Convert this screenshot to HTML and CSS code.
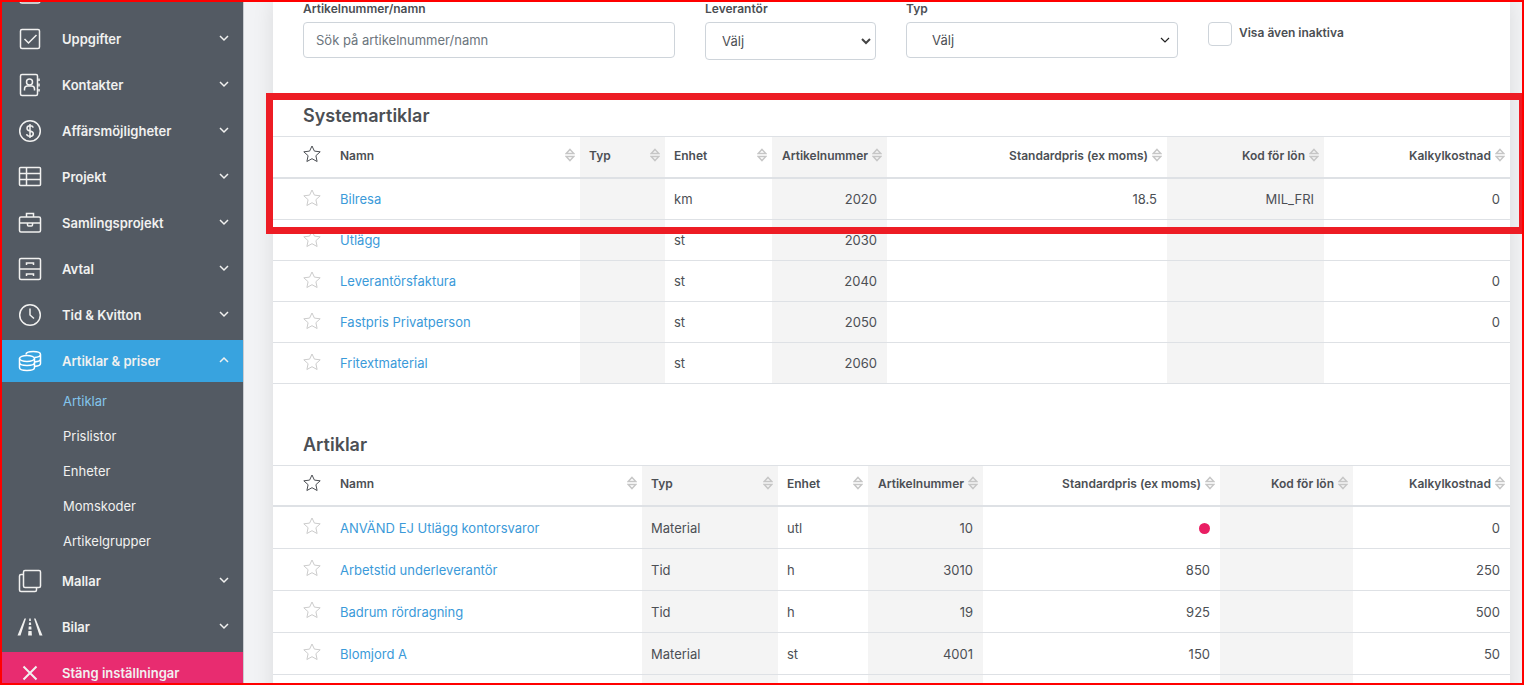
FILE: index.html
```
<!DOCTYPE html>
<html lang="sv">
<head>
	<meta charset="UTF-8">
	<title>Artiklar</title>
	<link rel="stylesheet" href="styles.css">
</head>
<body>

<!-- shared symbols -->
<svg class="symbols" aria-hidden="true">
	<symbol id="chevron" viewBox="0 0 10 10"><path d="M1 3l4 4 4-4"/></symbol>
	<symbol id="star" viewBox="0 0 18 18"><path d="M9 1l2.400 5.100 5.800.7-4.300 3.900 1.200 5.800L9 13.700l-5.100 2.800 1.200-5.800L.8 6.800l5.800-.7z"/></symbol>
	<symbol id="sort" viewBox="0 0 10 14"><path d="M5 1.400L8.900 5.600H1.100zM5 12.600L8.900 8.400H1.100z"/></symbol>
</svg>

<div class="app">
	<nav class="sidebar">
		<ul class="menu">
			<li><button type="button" class="menu-item">
				<svg class="icon" viewBox="0 0 24 24"><rect x="2" y="2" width="20" height="20" rx="2"/></svg>
			</button></li>
			<li><button type="button" class="menu-item">
				<svg class="icon" viewBox="0 0 24 24"><rect x="2.500" y="2.500" width="19" height="19" rx="1.500"/><path d="M6.500 12l4 4 8-8"/></svg>
				<span>Uppgifter</span><svg class="chevron"><use href="#chevron"/></svg>
			</button></li>
			<li><button type="button" class="menu-item">
				<svg class="icon" viewBox="0 0 24 24"><rect x="2.500" y="1.500" width="17" height="21" rx="1.500"/><circle cx="11.500" cy="9" r="3"/><path d="M6.500 17.500v-1.500q0-3 3-3h4q3 0 3 3v1.500M21 5.500v2.500M21 10.500v3M21 16v2.500"/></svg>
				<span>Kontakter</span><svg class="chevron"><use href="#chevron"/></svg>
			</button></li>
			<li><button type="button" class="menu-item">
				<svg class="icon" viewBox="0 0 24 24"><circle cx="12" cy="12" r="10.300"/><path d="M15.200 8.600q-.5-1.900-3.200-1.900-3 0-3 2.500 0 2 3 2.700 3.300.700 3.300 2.800 0 2.600-3.300 2.600-2.900 0-3.400-2.200M12 5v14"/></svg>
				<span>Affärsmöjligheter</span><svg class="chevron"><use href="#chevron"/></svg>
			</button></li>
			<li><button type="button" class="menu-item">
				<svg class="icon" viewBox="0 0 24 24"><rect x="1.500" y="2.500" width="21" height="18" rx="1"/><path d="M1.500 8.500h21M1.500 14.500h21M8.500 2.500v18"/></svg>
				<span>Projekt</span><svg class="chevron"><use href="#chevron"/></svg>
			</button></li>
			<li><button type="button" class="menu-item">
				<svg class="icon" viewBox="0 0 24 24"><rect x="1.500" y="6" width="21" height="15" rx="1.500"/><path d="M8.500 6V2.500h7V6M1.500 12h21M9.500 12v2q0 1 1 1h3q1 0 1-1v-2"/></svg>
				<span>Samlingsprojekt</span><svg class="chevron"><use href="#chevron"/></svg>
			</button></li>
			<li><button type="button" class="menu-item">
				<svg class="icon" viewBox="0 0 24 24"><rect x="1.500" y="1.500" width="21" height="21" rx="1.500"/><path d="M1.500 12h21M8.500 8V6h7v2M8.500 19v-2h7v2"/></svg>
				<span>Avtal</span><svg class="chevron"><use href="#chevron"/></svg>
			</button></li>
			<li><button type="button" class="menu-item">
				<svg class="icon" viewBox="0 0 24 24"><circle cx="12" cy="12" r="10.300"/><path d="M12 5.500V12l4 3.500"/></svg>
				<span>Tid &amp; Kvitton</span><svg class="chevron"><use href="#chevron"/></svg>
			</button></li>
			<li class="open"><button type="button" class="menu-item active" aria-expanded="true">
				<svg class="icon coins" viewBox="0 0 24 24"><ellipse cx="9" cy="9.500" rx="7.500" ry="3"/><path d="M1.500 9.500v9c0 1.700 3.300 3 7.500 3s7.500-1.300 7.500-3v-9M1.500 13.500c0 1.700 3.300 3 7.500 3s7.500-1.300 7.500-3"/><path d="M8 5.500c0-1.700 3.200-3 7.300-3s7.200 1.300 7.200 3-2.500 2.800-6 3M22.500 5.500v9c0 1.500-2.500 2.600-6 2.900M22.500 10c0 1.500-2.500 2.600-6 2.900"/></svg>
				<span>Artiklar &amp; priser</span><svg class="chevron up"><use href="#chevron"/></svg>
			</button>
				<ul class="submenu">
					<li><a href="#artiklar" class="current">Artiklar</a></li>
					<li><a href="#prislistor">Prislistor</a></li>
					<li><a href="#enheter">Enheter</a></li>
					<li><a href="#momskoder">Momskoder</a></li>
					<li><a href="#artikelgrupper">Artikelgrupper</a></li>
				</ul>
			</li>
			<li><button type="button" class="menu-item">
				<svg class="icon" viewBox="0 0 24 24"><rect x="5.500" y="1.500" width="17" height="17" rx="1.500"/><path d="M5.500 5.500H3q-1.500 0-1.500 1.500v14q0 1.500 1.500 1.500h14q1.500 0 1.500-1.500v-2.500"/></svg>
				<span>Mallar</span><svg class="chevron"><use href="#chevron"/></svg>
			</button></li>
			<li><button type="button" class="menu-item">
				<svg class="icon filled" viewBox="0 0 24 24"><path d="M6.500 3.500h1.500L2.500 20.500H-.5zM17.500 3.500H16l5.500 17h3zM11.300 3.500h1.400l.2 2.500h-1.800zM11 7.500h2l.2 2.500h-2.400zM10.700 11.500h2.600l.2 3h-3zM10.400 16h3.200l.3 4.500h-3.800z"/></svg>
				<span>Bilar</span><svg class="chevron"><use href="#chevron"/></svg>
			</button></li>
			<li><button type="button" class="menu-item close">
				<svg class="icon" viewBox="0 0 24 24"><path d="M5.500 5.500l13 13M18.500 5.500l-13 13"/></svg>
				<span>Stäng inställningar</span>
			</button></li>
		</ul>
	</nav>

	<main class="content">
		<div class="card">
			<form class="filters">
				<div class="field">
					<label for="search">Artikelnummer/namn</label>
					<input type="text" id="search" placeholder="Sök på artikelnummer/namn">
				</div>
				<div class="field">
					<label for="supplier">Leverantör</label>
					<div class="select-wrap">
						<select id="supplier" class="supplier"><option>Välj</option></select>
						<svg class="arrow bold"><use href="#chevron"/></svg>
					</div>
				</div>
				<div class="field">
					<label for="type">Typ</label>
					<div class="select-wrap">
						<select id="type" class="type"><option>Välj</option></select>
						<svg class="arrow"><use href="#chevron"/></svg>
					</div>
				</div>
				<div class="check">
					<input type="checkbox" id="inactive">
					<label for="inactive">Visa även inaktiva</label>
				</div>
			</form>

			<section class="group highlighted">
				<h2>Systemartiklar</h2>
				<table class="articles system">
					<colgroup><col><col><col><col><col><col><col><col></colgroup>
					<thead>
						<tr>
							<th><svg class="star"><use href="#star"/></svg></th>
							<th><div class="sortable">Namn <svg class="sort"><use href="#sort"/></svg></div></th>
							<th><div class="sortable">Typ <svg class="sort"><use href="#sort"/></svg></div></th>
							<th><div class="sortable">Enhet <svg class="sort"><use href="#sort"/></svg></div></th>
							<th><div class="sortable">Artikelnummer <svg class="sort"><use href="#sort"/></svg></div></th>
							<th><div class="sortable">Standardpris (ex moms) <svg class="sort"><use href="#sort"/></svg></div></th>
							<th><div class="sortable">Kod för lön <svg class="sort"><use href="#sort"/></svg></div></th>
							<th><div class="sortable">Kalkylkostnad <svg class="sort"><use href="#sort"/></svg></div></th>
						</tr>
					</thead>
					<tbody>
						<tr><td><svg class="star"><use href="#star"/></svg></td><td><a href="#2020">Bilresa</a></td><td></td><td>km</td><td>2020</td><td>18.5</td><td>MIL_FRI</td><td>0</td></tr>
						<tr><td><svg class="star"><use href="#star"/></svg></td><td><a href="#2030">Utlägg</a></td><td></td><td>st</td><td>2030</td><td></td><td></td><td></td></tr>
						<tr><td><svg class="star"><use href="#star"/></svg></td><td><a href="#2040">Leverantörsfaktura</a></td><td></td><td>st</td><td>2040</td><td></td><td></td><td>0</td></tr>
						<tr><td><svg class="star"><use href="#star"/></svg></td><td><a href="#2050">Fastpris Privatperson</a></td><td></td><td>st</td><td>2050</td><td></td><td></td><td>0</td></tr>
						<tr><td><svg class="star"><use href="#star"/></svg></td><td><a href="#2060">Fritextmaterial</a></td><td></td><td>st</td><td>2060</td><td></td><td></td><td></td></tr>
					</tbody>
				</table>
			</section>

			<section class="group">
				<h2>Artiklar</h2>
				<table class="articles own">
					<colgroup><col><col><col><col><col><col><col><col></colgroup>
					<thead>
						<tr>
							<th><svg class="star"><use href="#star"/></svg></th>
							<th><div class="sortable">Namn <svg class="sort"><use href="#sort"/></svg></div></th>
							<th><div class="sortable">Typ <svg class="sort"><use href="#sort"/></svg></div></th>
							<th><div class="sortable">Enhet <svg class="sort"><use href="#sort"/></svg></div></th>
							<th><div class="sortable">Artikelnummer <svg class="sort"><use href="#sort"/></svg></div></th>
							<th><div class="sortable">Standardpris (ex moms) <svg class="sort"><use href="#sort"/></svg></div></th>
							<th><div class="sortable">Kod för lön <svg class="sort"><use href="#sort"/></svg></div></th>
							<th><div class="sortable">Kalkylkostnad <svg class="sort"><use href="#sort"/></svg></div></th>
						</tr>
					</thead>
					<tbody>
						<tr><td><svg class="star"><use href="#star"/></svg></td><td><a href="#10">ANVÄND EJ Utlägg kontorsvaror</a></td><td>Material</td><td>utl</td><td>10</td><td><span class="dot"></span></td><td></td><td>0</td></tr>
						<tr><td><svg class="star"><use href="#star"/></svg></td><td><a href="#3010">Arbetstid underleverantör</a></td><td>Tid</td><td>h</td><td>3010</td><td>850</td><td></td><td>250</td></tr>
						<tr><td><svg class="star"><use href="#star"/></svg></td><td><a href="#19">Badrum rördragning</a></td><td>Tid</td><td>h</td><td>19</td><td>925</td><td></td><td>500</td></tr>
						<tr><td><svg class="star"><use href="#star"/></svg></td><td><a href="#4001">Blomjord A</a></td><td>Material</td><td>st</td><td>4001</td><td>150</td><td></td><td>50</td></tr>
						<tr><td></td><td></td><td></td><td></td><td></td><td></td><td></td><td></td></tr>
					</tbody>
				</table>
			</section>
		</div>
	</main>
</div>
</body>
</html>
```
FILE: styles.css
```
:root {
	--color-text: #4c4f54;
	--color-link: #3b9ad9;
	--color-sidebar: #535a63;
	--color-active: #38a3df;
	--color-close: #e82c70;
	--color-border: #dee1e5;
	--color-input-border: #ced4da;
	--color-stripe: #f4f4f4;
	--color-frame: #ff0000;
	--color-highlight: #ed1c24;
}

*,
*::after {
	box-sizing: border-box;
}

body {
	margin: 0;
	font: 13px/20px Inter, "Open Sans", sans-serif;
	color: var(--color-text);
}

svg {
	display: block;
	fill: none;
	stroke: currentColor;
}

a {
	color: var(--color-link);
	text-decoration: none;
}

.symbols {
	display: none;
}

.app {
	display: flex;
	height: 100vh;
	border: 2px solid var(--color-frame);
	overflow: hidden;
}

/* sidebar */

.sidebar {
	flex: none;
	width: 242px;
	background: var(--color-sidebar);
	border-right: 1px solid #c9ccd0;
}

.menu,
.submenu {
	list-style: none;
	margin: 0;
	padding: 0;
}

/* the list is scrolled down a little */
.menu {
	margin-top: -30px;
}

.menu > li {
	margin-bottom: 4px;
}

.menu > li.open {
	margin-bottom: 0;
}

.menu-item {
	display: flex;
	align-items: center;
	width: 100%;
	height: 42px;
	padding: 0 14px 0 16px;
	border: 0;
	background: none;
	color: #f1f1f0;
	font: inherit;
	font-weight: 600;
	text-align: left;
}

.menu-item.active {
	background: var(--color-active);
}

.menu-item.close {
	background: var(--color-close);
}

.menu-item span {
	flex: 1;
	padding-left: 20px;
}

.icon {
	width: 24px;
	height: 24px;
	stroke-width: 1.5;
}

.coins {
	stroke: #fff;
}

.close .icon {
	stroke-width: 2;
}

.icon.filled {
	fill: currentColor;
	stroke: none;
	overflow: visible;
}

.chevron {
	width: 10px;
	height: 10px;
	margin-bottom: 2px;
	stroke-width: 1.5;
}

.chevron.up {
	transform: rotate(180deg);
}

.submenu {
	padding: 2px 0 1px;
}

.submenu a {
	display: block;
	padding: 0 0 0 61px;
	line-height: 35px;
	color: #f1f1f0;
}

.submenu a.current {
	color: #83c5ec;
}

/* content */

.content {
	flex: 1;
	padding: 0 12px 0 29px;
	background: #f2f3f5;
}

.card {
	min-height: 100%;
	background: #fff;
	box-shadow: 0 0 20px rgba(0, 0, 0, .1);
}

.filters {
	display: grid;
	grid-template-columns: 372fr 171fr 272fr 272fr;
	gap: 30px;
	align-items: start;
	padding: 0 30px;
	height: 101px;
}

.field label {
	display: block;
	height: 20px;
	line-height: 14px;
}

label {
	font-size: 12px;
	font-weight: 600;
}

input[type="text"],
select {
	appearance: none;
	width: 100%;
	height: 36px;
	padding: 0 12px;
	border: 1px solid var(--color-input-border);
	border-radius: 4px;
	background: #fff;
	color: var(--color-text);
	font: inherit;
}

input::placeholder {
	color: #6c757d;
}

.select-wrap {
	position: relative;
}

.select-wrap .supplier {
	height: 38px;
	padding-left: 16px;
}

.select-wrap .type {
	padding-left: 25px;
}

.arrow {
	position: absolute;
	top: 50%;
	right: 8px;
	width: 10px;
	height: 10px;
	margin-top: -5px;
	stroke: #222;
	stroke-width: 1.2;
	pointer-events: none;
}

.arrow.bold {
	right: 5px;
	stroke: #444;
	stroke-width: 2;
}

.check {
	display: flex;
	gap: 7px;
	padding-top: 20px;
}

.check label {
	line-height: 22px;
}

.check input {
	appearance: none;
	width: 24px;
	height: 24px;
	margin: 0;
	border: 1px solid var(--color-input-border);
	border-radius: 4px;
}

/* article tables */

.group {
	position: relative;
	padding-bottom: 48px;
}

.group h2 {
	margin: 0;
	padding: 0 30px 8px;
	font-size: 18px;
	font-weight: 600;
	line-height: 25px;
}

.highlighted::after {
	content: "";
	position: absolute;
	top: -10px;
	left: -7px;
	right: -16px;
	height: 141px;
	border: 7px solid var(--color-highlight);
	pointer-events: none;
}

.articles {
	width: 100%;
	table-layout: fixed;
	border-collapse: separate;
	border-spacing: 0;
	border-top: 1px solid var(--color-border);
}

.articles col:nth-child(1) { width: 58px; }

.system col:nth-child(2) { width: 249px; }
.system col:nth-child(3) { width: 85px; }
.system col:nth-child(4) { width: 107px; }
.system col:nth-child(5) { width: 115px; }
.system col:nth-child(6) { width: 280px; }
.system col:nth-child(7) { width: 157px; }
.system col:nth-child(8) { width: 186px; }

.own col:nth-child(2) { width: 311px; }
.own col:nth-child(3) { width: 136px; }
.own col:nth-child(4) { width: 90px; }
.own col:nth-child(5) { width: 115px; }
.own col:nth-child(6) { width: 237px; }
.own col:nth-child(7) { width: 133px; }
.own col:nth-child(8) { width: 157px; }

.articles th {
	height: 42px;
	padding: 0 5px 3px 9px;
	border-bottom: 2px solid var(--color-border);
	font-size: 12px;
	font-weight: 600;
	text-align: left;
	white-space: nowrap;
}

.articles td {
	height: 41px;
	padding: 0 10px 0 9px;
	border-bottom: 1px solid var(--color-border);
}

.own th {
	height: 41px;
}

.own td {
	height: 42px;
}

.articles tr > :first-child {
	padding-left: 30px;
	padding-right: 0;
}

.articles tr > :nth-child(3),
.articles tr > :nth-child(5),
.articles tr > :nth-child(7) {
	background: var(--color-stripe);
}

.articles td:nth-child(n+5) {
	text-align: right;
}

.sortable {
	display: flex;
	align-items: center;
	justify-content: space-between;
	gap: 4px;
}

th:nth-child(n+5) .sortable {
	justify-content: flex-end;
}

.sort {
	width: 10px;
	height: 14px;
	margin-bottom: 2px;
	color: #c6c6c6;
	stroke-width: 1.5;
}

.star {
	width: 18px;
	height: 18px;
	margin-bottom: 3px;
}

td .star {
	color: #ccc;
}

.dot {
	display: inline-block;
	width: 11px;
	height: 11px;
	border-radius: 50%;
	background: #e91e63;
	vertical-align: middle;
}
```
